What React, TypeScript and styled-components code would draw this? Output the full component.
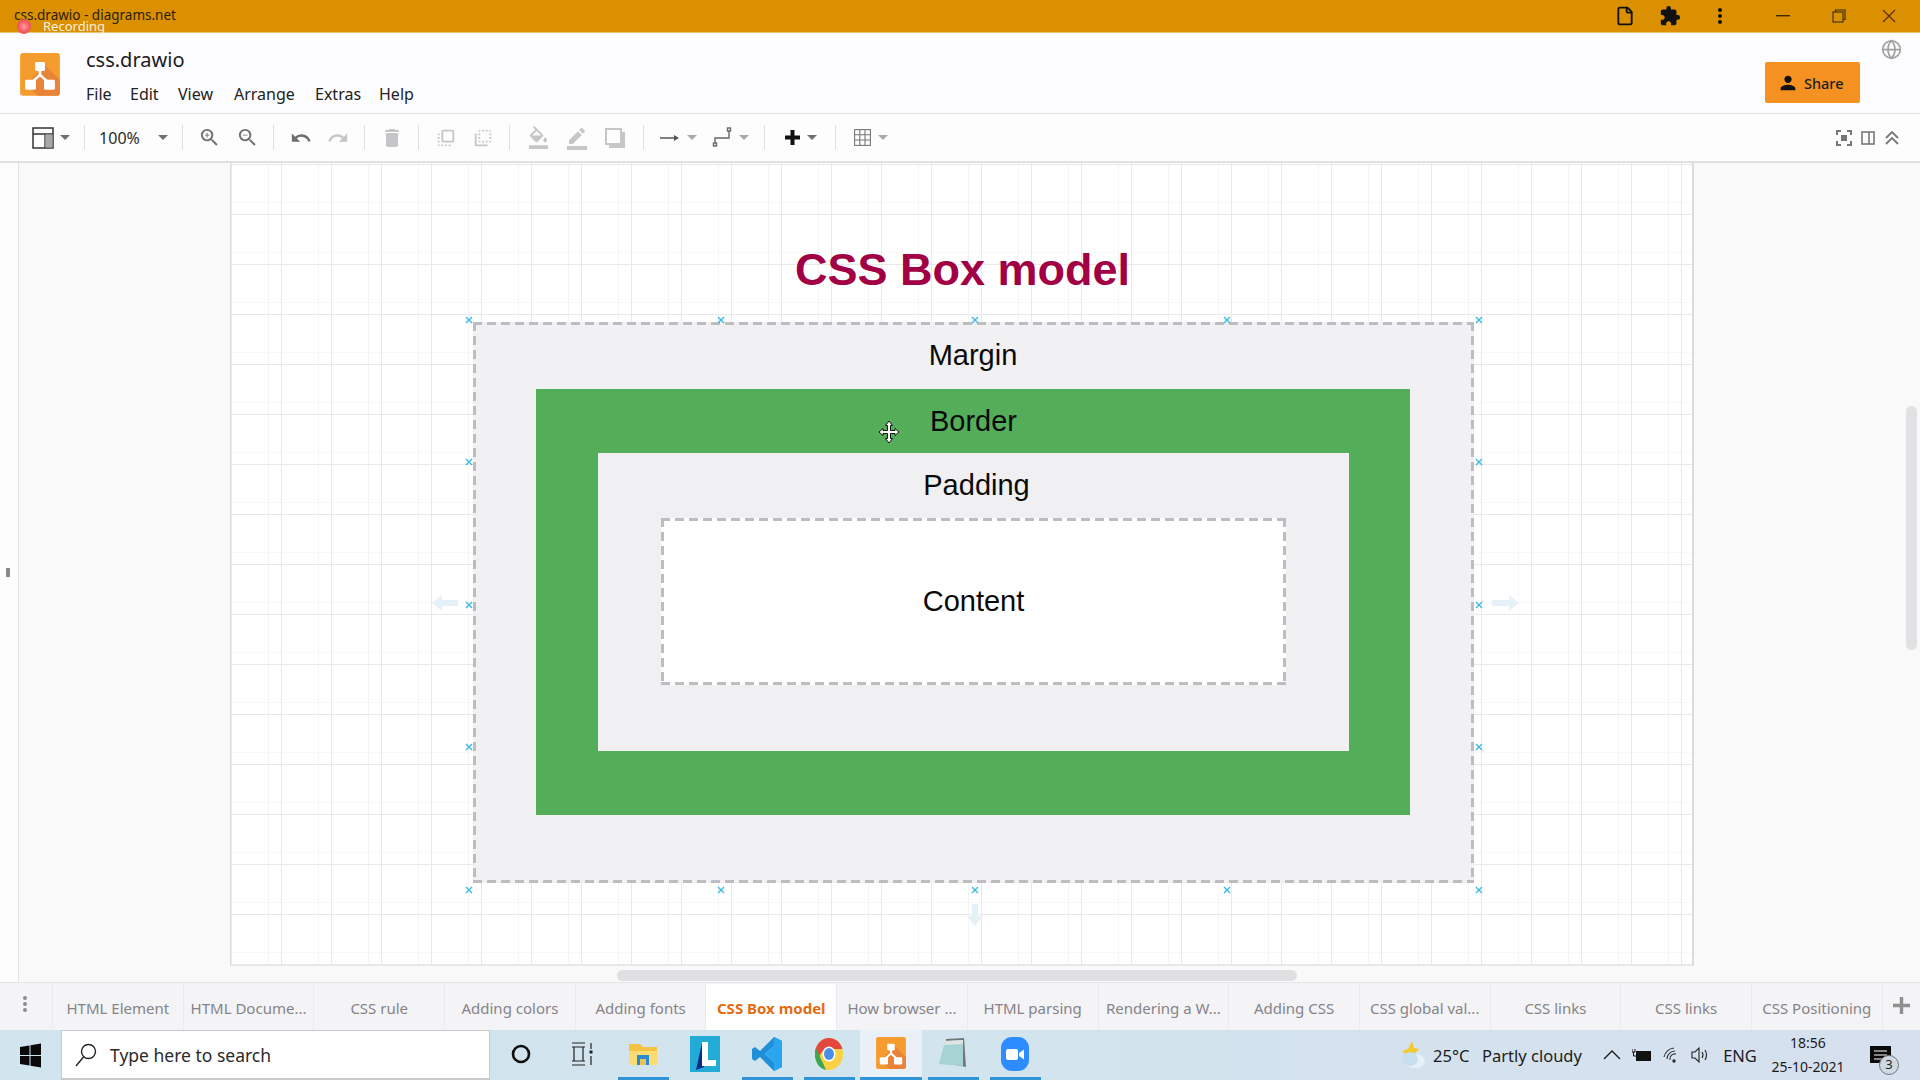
import React from 'react';
import styled, {createGlobalStyle} from 'styled-components';
import {Globe, File} from 'lucide-react';
import {
    MdZoomIn, MdZoomOut, MdUndo, MdRedo, MdDelete, MdFlipToFront, MdFlipToBack,
    MdFormatColorFill, MdBorderColor, MdExtension, MdPerson, MdMoreVert,
} from 'react-icons/md';

const GlobalStyle = createGlobalStyle`
    html, body {
        margin: 0;
        padding: 0;
        overflow: hidden;
    }
    body {
        font-family: "Noto Sans", "Open Sans", sans-serif;
        color: #1f1f1f;
    }
    * {
        box-sizing: border-box;
    }
`;

const Screen = styled.div`
    position: relative;
    width: 1920px;
    height: 1080px;
    display: flex;
    flex-direction: column;
    overflow: hidden;
    background: #fdfcfe;
`;

/* window title */
const TitleBar = styled.div`
    flex: none;
    height: 33px;
    background: #da9000;
    border-bottom: 1px solid #e6c36f;
    display: flex;
    align-items: center;
    padding-left: 14px;
    font-size: 13.5px;
    color: #2a1d05;
`;
const TitleText = styled.span`
    flex: 1;
    margin-top: -2px;
`;
const ChromeBtn = styled.div<{$w: number}>`
    width: ${p => p.$w}px;
    height: 32px;
    display: flex;
    align-items: center;
    justify-content: center;
    color: #111;
`;
const Recording = styled.div`
    position: absolute;
    left: 17px;
    top: 17px;
    display: flex;
    align-items: center;
    gap: 12px;
    font-size: 13px;
    color: #f6efe0;
`;
const RecordDot = styled.span`
    width: 14px;
    height: 15px;
    border-radius: 50%;
    background: radial-gradient(circle, #ff9c9c 0%, #f0525a 60%, #e8a08a 100%);
`;

/* app header */
const Header = styled.div`
    flex: none;
    height: 81px;
    display: flex;
    border-bottom: 1px solid #dfdee1;
    background: #fdfcfe;
`;
const LogoCell = styled.div`
    width: 86px;
    padding: 20px 0 0 20px;
`;
const FileBlock = styled.div`
    flex: 1;
    padding-top: 12px;
`;
const FileName = styled.div`
    font-size: 20px;
    line-height: 30px;
    color: #1b1b1f;
`;
const MenuRow = styled.div`
    display: flex;
    margin-top: 7px;
`;
const MenuItem = styled.span<{$w: number}>`
    width: ${p => p.$w}px;
    font-size: 16px;
    line-height: 24px;
    color: #222;
`;
const HeaderRight = styled.div`
    width: 155px;
    position: relative;
    padding: 29px 0 0 0;
`;
const GlobeIcon = styled.span`
    position: absolute;
    right: 18px;
    top: 6px;
    color: #a2a2a2;
    display: flex;
`;
const ShareButton = styled.div`
    width: 95px;
    height: 41px;
    background: #f59120;
    border-radius: 2px;
    display: flex;
    align-items: center;
    padding-left: 12px;
    gap: 5px;
    font-size: 14.5px;
    font-weight: 500;
    color: #1d1d1d;
`;

/* toolbar */
const Toolbar = styled.div`
    flex: none;
    height: 49px;
    display: flex;
    align-items: center;
    background: #fdfdfe;
    border-bottom: 2px solid #e0dfe2;
    padding-left: 18px;
`;
const ToolGroup = styled.div<{$w: number; $gap?: number}>`
    width: ${p => p.$w}px;
    display: flex;
    align-items: center;
    justify-content: center;
    gap: ${p => p.$gap ?? 0}px;
`;
const ToolSep = styled.span`
    width: 1px;
    height: 25px;
    background: #dfdee1;
    flex: none;
`;
const ToolIcon = styled.span<{$off?: boolean}>`
    display: flex;
    color: ${p => (p.$off ? '#c6c6c8' : '#6e6e70')};
`;
const Caret = styled.span<{$dark?: boolean; $ml?: number}>`
    width: 0;
    height: 0;
    margin-left: ${p => p.$ml ?? 0}px;
    border-left: 5px solid transparent;
    border-right: 5px solid transparent;
    border-top: 5px solid ${p => (p.$dark ? '#707070' : '#a9a9a9')};
`;
const ZoomValue = styled.span`
    font-size: 16px;
    color: #2b2b2b;
    margin-right: 18px;
`;
const ToolRight = styled.div`
    margin-left: auto;
    margin-right: 20px;
    display: flex;
    align-items: center;
    gap: 9px;
    color: #777;
`;

/* drawing area */
const Workspace = styled.div`
    flex: 1;
    min-height: 0;
    position: relative;
    display: flex;
    background: #f9f9fa;
`;
const LeftStrip = styled.div`
    width: 19px;
    background: #fdfdfd;
    border-right: 1px solid #e3e3e5;
    display: flex;
    align-items: center;
    justify-content: center;
    padding: 0 2px 0 0;
`;
const StripGrip = styled.span`
    width: 4px;
    height: 9px;
    margin-bottom: 0;
    background: #8a8a8a;
`;
const Canvas = styled.div`
    flex: 1;
    padding: 0 0 16px 211px;
`;
const Page = styled.div`
    width: 1464px;
    height: 100%;
    padding-top: 80px;
    background-color: #fff;
    border-left: 1px solid #dcdbde;
    border-right: 2px solid #dcdbde;
    border-bottom: 1px solid #e6e5e8;
    background-image:
        linear-gradient(90deg, #e9e8eb 1px, transparent 1px),
        linear-gradient(#e9e8eb 1px, transparent 1px),
        linear-gradient(90deg, #f5f4f7 1px, transparent 1px),
        linear-gradient(#f8f7fa 1px, transparent 1px);
    background-size: 50px 50px;
    background-position: 0 1px, 0 1px, 37px 0, 0 39px;
`;
const DiagramTitle = styled.div`
    height: 54px;
    margin: 0 0 25px 564px;
    font-family: "Liberation Sans", Arial, sans-serif;
    font-size: 45px;
    line-height: 54px;
    font-weight: 700;
    color: #a20045;
    white-space: nowrap;
`;
const LayerLabel = styled.div<{$h: number; $shift?: number}>`
    height: ${p => p.$h}px;
    display: flex;
    align-items: center;
    justify-content: center;
    padding-left: ${p => p.$shift ?? 0}px;
    font-family: "Liberation Sans", Arial, sans-serif;
    font-size: 29px;
    color: #0a0a0a;
`;
const dashed = `
    background-image:
        linear-gradient(90deg, #bdbcbe 9px, transparent 9px),
        linear-gradient(90deg, #bdbcbe 9px, transparent 9px),
        linear-gradient(#bdbcbe 9px, transparent 9px),
        linear-gradient(#bdbcbe 9px, transparent 9px);
    background-size: 14px 3px, 14px 3px, 3px 14px, 3px 14px;
    background-position: 0 0, 0 100%, 0 0, 100% 0;
    background-repeat: repeat-x, repeat-x, repeat-y, repeat-y;
`;
const MarginBox = styled.div`
    position: relative;
    width: 1001px;
    height: 561px;
    margin-left: 242px;
    padding: 0 64px 0 63px;
    background-color: #f1f0f2;
    ${dashed}
`;
const BorderBox = styled.div`
    height: 426px;
    padding: 0 61px 0 62px;
    background: #53ad59;
`;
const PaddingBox = styled.div`
    height: 298px;
    padding: 0 63px;
    background: #f0eff1;
`;
const ContentBox = styled.div`
    height: 167px;
    display: flex;
    align-items: center;
    justify-content: center;
    font-family: "Liberation Sans", Arial, sans-serif;
    font-size: 29px;
    color: #0a0a0a;
    background-color: #fff;
    ${dashed}
`;
const Handle = styled.svg<{$x: number; $y: number}>`
    position: absolute;
    left: ${p => p.$x - 4}px;
    top: ${p => p.$y - 4}px;
`;
const GhostArrow = styled.svg<{$x: number; $y: number}>`
    position: absolute;
    left: ${p => p.$x}px;
    top: ${p => p.$y}px;
`;
const MoveCursor = styled.svg`
    position: absolute;
    left: 405px;
    top: 98px;
`;
const HScroll = styled.span`
    position: absolute;
    left: 617px;
    top: 807px;
    width: 680px;
    height: 11px;
    border-radius: 6px;
    background: #e0dfe1;
`;
const VScroll = styled.span`
    position: absolute;
    left: 1906px;
    top: 243px;
    width: 11px;
    height: 244px;
    border-radius: 6px;
    background: #e2e1e3;
`;

/* sheet tabs */
const TabBar = styled.div`
    flex: none;
    height: 48px;
    display: flex;
    background: #f4f3f6;
    border-top: 1px solid #e4e3e6;
    padding-top: 1px;
`;
const TabMenu = styled.div`
    width: 53px;
    display: flex;
    justify-content: center;
    align-items: center;
    padding: 0 3px 6px 0;
    color: #8c8c8c;
    border-right: 1px solid #ebeaed;
`;
const Tab = styled.div<{$active?: boolean}>`
    width: 130.7px;
    flex: none;
    padding-top: 12px;
    text-align: center;
    font-size: 15px;
    line-height: 24px;
    white-space: nowrap;
    color: ${p => (p.$active ? '#e36c12' : '#858488')};
    font-weight: ${p => (p.$active ? 700 : 400)};
    background: ${p => (p.$active ? '#fff' : 'transparent')};
    border-right: 1px solid #ebeaed;
`;
const TabAdd = styled.div`
    flex: 1;
    display: flex;
    justify-content: center;
    padding-top: 13px;
`;

/* windows taskbar */
const Taskbar = styled.div`
    flex: none;
    height: 50px;
    display: flex;
    align-items: stretch;
    background: linear-gradient(90deg, #d1e5ee 0%, #d2e4ee 50%, #d6e0ee 100%);
`;
const StartBtn = styled.div`
    width: 61px;
    display: flex;
    align-items: center;
    justify-content: center;
`;
const SearchBox = styled.div`
    width: 429px;
    background: #fff;
    border: 1px solid #c9c9c9;
    border-bottom-width: 2px;
    display: flex;
    align-items: center;
    padding-left: 13px;
    gap: 13px;
    font-size: 17.5px;
    color: #2a2a2a;
`;
const TaskCell = styled.div<{$w: number; $open?: boolean; $active?: boolean}>`
    position: relative;
    width: ${p => p.$w}px;
    display: flex;
    align-items: center;
    justify-content: center;
    background: ${p => (p.$active ? '#eaf0f8' : 'transparent')};
    border-bottom: 3px solid transparent;
    &::after {
        content: '';
        display: ${p => (p.$open ? 'block' : 'none')};
        position: absolute;
        left: ${p => (p.$active ? 0 : 6)}px;
        right: ${p => (p.$active ? 0 : 5)}px;
        bottom: -3px;
        height: 3px;
        background: #2f95d6;
    }
`;
const Tray = styled.div`
    margin-left: auto;
    display: flex;
    align-items: stretch;
`;
const TrayCell = styled.div<{$w: number; $left?: boolean}>`
    width: ${p => p.$w}px;
    display: flex;
    align-items: center;
    justify-content: ${p => (p.$left ? 'flex-start' : 'center')};
    font-size: 16.5px;
    color: #1c1c1c;
    white-space: nowrap;
`;
const Clock = styled.div`
    width: 88px;
    display: flex;
    flex-direction: column;
    align-items: center;
    justify-content: center;
    font-size: 14px;
    line-height: 24px;
    color: #1c1c1c;
`;
const NotifyCell = styled.div`
    position: relative;
    width: 68px;
    padding: 16px 0 0 18px;
`;
const NotifyBadge = styled.span`
    position: absolute;
    left: 27px;
    top: 25px;
    width: 20px;
    height: 20px;
    border-radius: 50%;
    border: 1.5px solid #777;
    background: #cfd9e4;
    font-size: 13px;
    line-height: 17px;
    text-align: center;
    color: #222;
`;

const TABS = [
    'HTML Element', 'HTML Docume...', 'CSS rule', 'Adding colors', 'Adding fonts', 'CSS Box model',
    'How browser ...', 'HTML parsing', 'Rendering a W...', 'Adding CSS', 'CSS global val...',
    'CSS links', 'CSS links', 'CSS Positioning',
];
const MENUS: [string, number][] = [['File', 44], ['Edit', 48], ['View', 56], ['Arrange', 81], ['Extras', 64], ['Help', 40]];
const HANDLE_X = [-4, 248, 502, 754, 1006];
const HANDLE_Y = [-2, 140, 283, 425, 568];

const DrawioLogo = ({size = 40}: {size?: number}) => (
    <svg width={size} height={size * 1.07} viewBox="0 0 40 43">
        <rect width="40" height="43" rx="3" fill="#f59c2f"/>
        <path d="M25 12 L40 27 V40 a3 3 0 0 1 -3 3 H18 L6 32 Z" fill="#e8843a"/>
        <path d="M20 16 V22 M20 22 L10 31 M20 22 L30 31" stroke="#fff" strokeWidth="2.6" fill="none"/>
        <rect x="15" y="9" width="10" height="9" rx="1.5" fill="#fff"/>
        <rect x="5" y="27" width="11" height="10" rx="1.5" fill="#fff"/>
        <rect x="24" y="27" width="11" height="10" rx="1.5" fill="#fff"/>
    </svg>
);

const HandleMark = ({x, y}: {x: number; y: number}) => (
    <Handle $x={x} $y={y} width="8" height="8" viewBox="0 0 8 8">
        <path d="M1 1 L7 7 M7 1 L1 7" stroke="#3bb9e6" strokeWidth="1.4"/>
    </Handle>
);

const App = () => {
    return (
        <Screen>
            <GlobalStyle/>
            <TitleBar>
                <TitleText>css.drawio - diagrams.net</TitleText>
                <ChromeBtn $w={46}><File size={20} strokeWidth={2.2}/></ChromeBtn>
                <ChromeBtn $w={44}><MdExtension size={22}/></ChromeBtn>
                <ChromeBtn $w={56}><MdMoreVert size={24}/></ChromeBtn>
                <ChromeBtn $w={70}>
                    <svg width="14" height="2"><rect width="14" height="1.4" fill="#3a2a08"/></svg>
                </ChromeBtn>
                <ChromeBtn $w={42}>
                    <svg width="14" height="14" viewBox="0 0 14 14" fill="none" stroke="#3a2a08" strokeWidth="1.1">
                        <rect x="1" y="3" width="10" height="10"/>
                        <path d="M3.5 3 V1 H13 V10.5 H11"/>
                    </svg>
                </ChromeBtn>
                <ChromeBtn $w={58}>
                    <svg width="14" height="14" stroke="#5a2a10" strokeWidth="1.1"><path d="M1 1 L13 13 M13 1 L1 13"/></svg>
                </ChromeBtn>
                <ChromeBtn $w={2}/>
            </TitleBar>
            <Recording><RecordDot/>Recording</Recording>

            <Header>
                <LogoCell><DrawioLogo/></LogoCell>
                <FileBlock>
                    <FileName>css.drawio</FileName>
                    <MenuRow>
                        {MENUS.map(([m, w]) => <MenuItem key={m} $w={w}>{m}</MenuItem>)}
                    </MenuRow>
                </FileBlock>
                <HeaderRight>
                    <GlobeIcon><Globe size={21} strokeWidth={2}/></GlobeIcon>
                    <ShareButton><MdPerson size={22} color="#111"/>Share</ShareButton>
                </HeaderRight>
            </Header>

            <Toolbar>
                <ToolGroup $w={66} $gap={6}>
                    <svg width="22" height="22" viewBox="0 0 22 22">
                        <rect x="1" y="1" width="20" height="20" fill="none" stroke="#333" strokeWidth="1.5"/>
                        <path d="M1 7 H21 M13 7 V21" stroke="#333" strokeWidth="1.3"/>
                        <rect x="13.5" y="7.5" width="7" height="13" fill="#a8a8a8"/>
                    </svg>
                    <Caret $dark/>
                </ToolGroup>
                <ToolSep/>
                <ToolGroup $w={97}><ZoomValue>100%</ZoomValue><Caret $dark/></ToolGroup>
                <ToolSep/>
                <ToolGroup $w={90} $gap={15}>
                    <ToolIcon><MdZoomIn size={23}/></ToolIcon>
                    <ToolIcon><MdZoomOut size={23}/></ToolIcon>
                </ToolGroup>
                <ToolSep/>
                <ToolGroup $w={90} $gap={15}>
                    <ToolIcon><MdUndo size={22}/></ToolIcon>
                    <ToolIcon $off><MdRedo size={22}/></ToolIcon>
                </ToolGroup>
                <ToolSep/>
                <ToolGroup $w={53}><ToolIcon $off><MdDelete size={24}/></ToolIcon></ToolGroup>
                <ToolSep/>
                <ToolGroup $w={90} $gap={15}>
                    <ToolIcon $off><MdFlipToFront size={22}/></ToolIcon>
                    <ToolIcon $off><MdFlipToBack size={22}/></ToolIcon>
                </ToolGroup>
                <ToolSep/>
                <ToolGroup $w={133} $gap={15}>
                    <ToolIcon $off><MdFormatColorFill size={23}/></ToolIcon>
                    <ToolIcon $off><MdBorderColor size={24}/></ToolIcon>
                    <ToolIcon $off>
                        <svg width="22" height="22" viewBox="0 0 22 22" fill="none">
                            <rect x="2" y="2" width="15" height="15" stroke="currentColor" strokeWidth="2"/>
                            <path d="M19.5 5 V19.5 H5" stroke="currentColor" strokeWidth="3"/>
                        </svg>
                    </ToolIcon>
                </ToolGroup>
                <ToolSep/>
                <ToolGroup $w={120}>
                    <svg width="20" height="10" viewBox="0 0 20 10">
                        <path d="M0 5 H17" stroke="#555" strokeWidth="1.5"/>
                        <path d="M14 2 L19 5 L14 8 Z" fill="#555"/>
                    </svg>
                    <Caret $ml={7}/>
                    <svg width="22" height="22" viewBox="0 0 22 22" fill="none" stroke="#666" strokeWidth="1.4" style={{marginLeft: 15}}>
                        <path d="M3 16 V11 H17 V4"/>
                        <rect x="1.5" y="16" width="3" height="3"/>
                        <rect x="15.5" y="1" width="3" height="3"/>
                    </svg>
                    <Caret $ml={5}/>
                </ToolGroup>
                <ToolSep/>
                <ToolGroup $w={70} $gap={6}>
                    <svg width="17" height="17" viewBox="0 0 17 17"><path d="M8.5 1 V16 M1 8.5 H16" stroke="#111" strokeWidth="4"/></svg>
                    <Caret $dark/>
                </ToolGroup>
                <ToolSep/>
                <ToolGroup $w={70} $gap={7}>
                    <svg width="17" height="17" viewBox="0 0 17 17" fill="none" stroke="#777" strokeWidth="1.1">
                        <rect x="0.6" y="0.6" width="15.8" height="15.8"/>
                        <path d="M5.8 1 V16 M11 1 V16 M1 5.8 H16 M1 11 H16"/>
                    </svg>
                    <Caret/>
                </ToolGroup>
                <ToolRight>
                    <svg width="16" height="16" viewBox="0 0 16 16" fill="none" stroke="#777" strokeWidth="2">
                        <path d="M1 5 V1 H5 M11 1 H15 V5 M15 11 V15 H11 M5 15 H1 V11"/>
                        <rect x="5" y="5" width="6" height="6" fill="#777" stroke="none"/>
                    </svg>
                    <svg width="14" height="14" viewBox="0 0 14 14" fill="none" stroke="#777" strokeWidth="1.6">
                        <rect x="1" y="1" width="12" height="12"/><path d="M8 1 V13"/>
                    </svg>
                    <svg width="16" height="16" viewBox="0 0 16 16" fill="none" stroke="#777" strokeWidth="1.8">
                        <path d="M2 8 L8 2 L14 8 M2 14 L8 8 L14 14"/>
                    </svg>
                </ToolRight>
            </Toolbar>

            <Workspace>
                <LeftStrip><StripGrip/></LeftStrip>
                <Canvas>
                    <Page>
                        <DiagramTitle>CSS Box model</DiagramTitle>
                        <MarginBox>
                            <LayerLabel $h={67}>Margin</LayerLabel>
                            <BorderBox>
                                <LayerLabel $h={64}>Border</LayerLabel>
                                <PaddingBox>
                                    <LayerLabel $h={65} $shift={6}>Padding</LayerLabel>
                                    <ContentBox>Content</ContentBox>
                                </PaddingBox>
                            </BorderBox>
                            {HANDLE_X.map(x => <HandleMark key={`t${x}`} x={x} y={HANDLE_Y[0]}/>)}
                            {HANDLE_X.map(x => <HandleMark key={`b${x}`} x={x} y={HANDLE_Y[4]}/>)}
                            {HANDLE_Y.slice(1, 4).map(y => <HandleMark key={`l${y}`} x={HANDLE_X[0]} y={y}/>)}
                            {HANDLE_Y.slice(1, 4).map(y => <HandleMark key={`r${y}`} x={HANDLE_X[4]} y={y}/>)}
                            <GhostArrow $x={-42} $y={272} width="28" height="18" viewBox="0 0 28 18">
                                <path d="M1 9 L11 1 V6 H27 V12 H11 V17 Z" fill="#e4f1f8"/>
                            </GhostArrow>
                            <GhostArrow $x={1017} $y={272} width="30" height="18" viewBox="0 0 30 18">
                                <path d="M29 9 L19 1 V6 H2 V12 H19 V17 Z" fill="#e6f0f9"/>
                            </GhostArrow>
                            <GhostArrow $x={493} $y={581} width="18" height="24" viewBox="0 0 18 24">
                                <path d="M9 23 L1 13 H6 V1 H12 V13 H17 Z" fill="#e4f1f8"/>
                            </GhostArrow>
                            <MoveCursor width="22" height="24" viewBox="0 0 22 24">
                                <path d="M11 1 L14.5 5.5 H12.5 V10.5 H17 V8.5 L21 12 L17 15.5 V13.5 H12.5 V18.5 H14.5 L11 23 L7.5 18.5 H9.5 V13.5 H5 V15.5 L1 12 L5 8.5 V10.5 H9.5 V5.5 H7.5 Z"
                                      fill="#fff" stroke="#111" strokeWidth="1"/>
                            </MoveCursor>
                        </MarginBox>
                    </Page>
                </Canvas>
                <HScroll/>
                <VScroll/>
            </Workspace>

            <TabBar>
                <TabMenu><MdMoreVert size={24}/></TabMenu>
                {TABS.map((t, i) => <Tab key={i} $active={t === 'CSS Box model'}>{t}</Tab>)}
                <TabAdd>
                    <svg width="17" height="17" viewBox="0 0 17 17"><path d="M8.5 0 V17 M0 8.5 H17" stroke="#8f8f8f" strokeWidth="3.4"/></svg>
                </TabAdd>
            </TabBar>

            <Taskbar>
                <StartBtn>
                    <svg width="21" height="25" viewBox="0 0 21 25" fill="#0a0a0a">
                        <path d="M0 4 L9.5 2.5 V12 H0 Z M10.5 2.3 L21 0.5 V12 H10.5 Z M0 13 H9.5 V22.5 L0 21 Z M10.5 13 H21 V24.5 L10.5 22.7 Z"/>
                    </svg>
                </StartBtn>
                <SearchBox>
                    <svg width="22" height="24" viewBox="0 0 22 24" fill="none" stroke="#222" strokeWidth="1.4">
                        <circle cx="13.5" cy="8.5" r="7"/>
                        <path d="M8.5 14 L1 23"/>
                    </svg>
                    Type here to search
                </SearchBox>
                <TaskCell $w={61}>
                    <svg width="20" height="20" fill="none" stroke="#111" strokeWidth="2.6"><circle cx="10" cy="10" r="8"/></svg>
                </TaskCell>
                <TaskCell $w={61}>
                    <svg width="22" height="24" viewBox="0 0 22 24" fill="none" stroke="#222" strokeWidth="1.2">
                        <path d="M1 1 H14 M1 5 H14 M1 23 H14 M1 19 H14"/>
                        <path d="M3 5 V19 M12 5 V19"/>
                        <path d="M20 1 V7 M20 14 V23"/>
                        <rect x="18.5" y="8.5" width="3" height="3" fill="#222" stroke="none"/>
                    </svg>
                </TaskCell>
                <TaskCell $w={62} $open>
                    <svg width="30" height="30" viewBox="0 0 30 30">
                        <path d="M1 5 H12 L15 8 H29 V26 H1 Z" fill="#f5c242"/>
                        <path d="M1 12 H29 V26 H1 Z" fill="#fbdc72"/>
                        <rect x="9" y="16" width="12" height="10" fill="#2a8ad0"/>
                        <rect x="12" y="20" width="6" height="6" fill="#e8c35a"/>
                    </svg>
                </TaskCell>
                <TaskCell $w={62}>
                    <svg width="30" height="36" viewBox="0 0 30 36">
                        <rect width="30" height="36" fill="#22abd6"/>
                        <path d="M6 34 L12 7 H15 L14 31 Z" fill="#0b2a8a"/>
                        <path d="M12 6 H18 V24 H26 V30 H12 Z" fill="#fff"/>
                    </svg>
                </TaskCell>
                <TaskCell $w={62} $open>
                    <svg width="30" height="36" viewBox="0 0 30 36">
                        <path d="M22 1 L30 5 V31 L22 35 L8 21 L3 25 L0 23 V13 L3 11 L8 15 Z M22 10 L13 18 L22 26 Z" fill="#1f8fd8"/>
                        <path d="M22 1 L30 5 V31 L22 35 Z M22 10 L22 26 L13 18 Z" fill="#2aa6ee" fillRule="evenodd"/>
                    </svg>
                </TaskCell>
                <TaskCell $w={62} $open>
                    <svg width="28" height="32" viewBox="0 0 28 32">
                        <ellipse cx="14" cy="16" rx="14" ry="16" fill="#fbd146"/>
                        <path d="M14 0 C21 0 26 5 27.5 11 H14 C10 11 6.5 13 5 17 L2 23 C0.5 20 0 18 0 16 C0 7 6 0 14 0 Z" fill="#e2483c"/>
                        <path d="M0.8 10 L8 25 L11 32 C4 30.5 0 24 0 16 C0 14 0.3 12 0.8 10 Z" fill="#3da750"/>
                        <ellipse cx="14" cy="16" rx="6.5" ry="7.5" fill="#fff"/>
                        <ellipse cx="14" cy="16" rx="5" ry="6" fill="#4d8fe6"/>
                    </svg>
                </TaskCell>
                <TaskCell $w={62} $open $active>
                    <DrawioLogo size={30}/>
                </TaskCell>
                <TaskCell $w={62} $open>
                    <svg width="30" height="34" viewBox="0 0 30 34">
                        <path d="M8 2 L26 1 L28 30 L8 26 Z" fill="#6f7a78"/>
                        <path d="M7 4 L25 3 L25 29 L1 27 Z" fill="#a6d3d4"/>
                        <path d="M7 4 L25 3 L25 7 L6 8 Z" fill="#dfe5e3"/>
                    </svg>
                </TaskCell>
                <TaskCell $w={62} $open>
                    <svg width="28" height="34" viewBox="0 0 28 34">
                        <rect width="28" height="34" rx="11" fill="#2d8cff"/>
                        <rect x="5" y="12" width="12" height="11" rx="2" fill="#fff"/>
                        <path d="M18 16 L23 12.5 V22.5 L18 19 Z" fill="#fff"/>
                    </svg>
                </TaskCell>
                <Tray>
                    <TrayCell $w={40}>
                        <svg width="28" height="30" viewBox="0 0 28 30">
                            <path d="M13 1 L15 8 L20 9 L14 15 L6 14 L3 11 L9 9 Z" fill="#f5c92e"/>
                            <ellipse cx="16" cy="21" rx="10" ry="7" fill="#e6f0f8"/>
                            <ellipse cx="11" cy="19" rx="8" ry="7" fill="#c8dff0"/>
                        </svg>
                    </TrayCell>
                    <TrayCell $w={49} $left>25°C</TrayCell>
                    <TrayCell $w={114} $left>Partly cloudy</TrayCell>
                    <TrayCell $w={32}>
                        <svg width="18" height="10" fill="none" stroke="#1c1c1c" strokeWidth="1.3"><path d="M1 9 L9 1 L17 9"/></svg>
                    </TrayCell>
                    <TrayCell $w={28}>
                        <svg width="20" height="14" viewBox="0 0 20 14">
                            <rect x="4" y="3" width="15" height="10" fill="#111"/>
                            <path d="M0 1 V4 M3 1 V4 M0 4 H3 M1.5 4 V8 H4" stroke="#111" fill="none"/>
                        </svg>
                    </TrayCell>
                    <TrayCell $w={30}>
                        <svg width="17" height="17" viewBox="0 0 17 17" fill="none" stroke="#333" strokeWidth="1.1">
                            <path d="M1 10 A11 11 0 0 1 11 1 M4 12 A8 8 0 0 1 12 4 M7 13 A5 5 0 0 1 13 7"/>
                            <circle cx="11" cy="14" r="1.2" fill="#333"/>
                        </svg>
                    </TrayCell>
                    <TrayCell $w={30}>
                        <svg width="20" height="18" viewBox="0 0 20 18" fill="none" stroke="#222" strokeWidth="1.1">
                            <path d="M1 6 H4 L8 2 V16 L4 12 H1 Z"/>
                            <path d="M11 6 Q13 9 11 12 M14 4 Q17 9 14 14"/>
                        </svg>
                    </TrayCell>
                    <TrayCell $w={48}>ENG</TrayCell>
                    <Clock><span>18:56</span><span>25-10-2021</span></Clock>
                    <NotifyCell>
                        <svg width="21" height="20" viewBox="0 0 21 20">
                            <path d="M0 0 H21 V17 H0 Z" fill="#0a0a0a"/>
                            <path d="M4 5 H17 M4 9 H17 M4 13 H13" stroke="#fff" strokeWidth="1.2"/>
                        </svg>
                        <NotifyBadge>3</NotifyBadge>
                    </NotifyCell>
                </Tray>
            </Taskbar>
        </Screen>
    );
};

export default App;
